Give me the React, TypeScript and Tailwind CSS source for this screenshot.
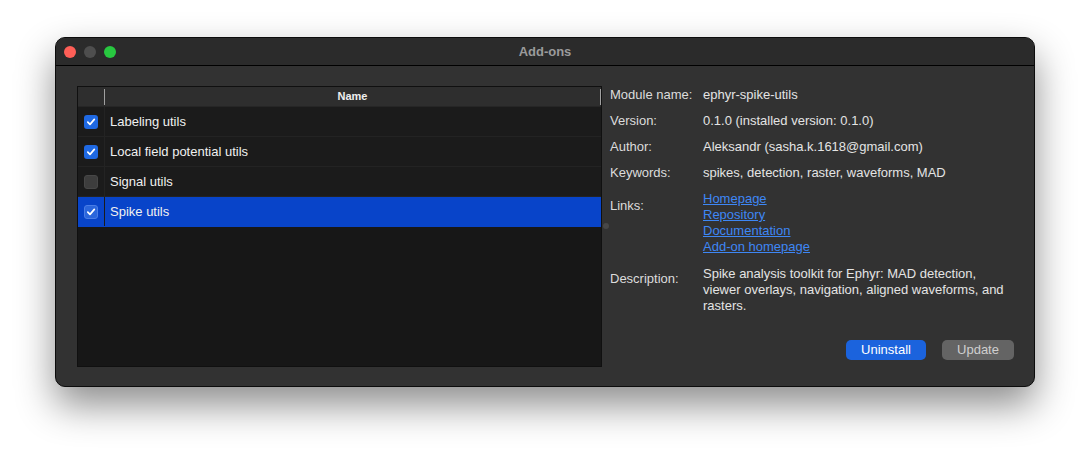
import React from 'react';

const modules = [
  { name: 'Labeling utils', checked: true },
  { name: 'Local field potential utils', checked: true },
  { name: 'Signal utils', checked: false },
  { name: 'Spike utils', checked: true, selected: true },
];

function CheckBox({ checked, selected }: { checked: boolean; selected?: boolean }) {
  if (!checked) {
    return <div className="w-[14px] h-[14px] rounded-[3px] bg-[#3d3d3d] border border-[#474747]" />;
  }
  return (
    <div
      className={`w-[14px] h-[14px] rounded-[3px] flex items-center justify-center ${
        selected ? 'bg-[#2b66dc] border border-[#4a7de6]' : 'bg-[#1f69e3]'
      }`}
    >
      <svg width="10" height="10" viewBox="0 0 10 10" fill="none">
        <path d="M1.8 5.2 L4 7.4 L8.3 2.4" stroke="white" strokeWidth="1.7" strokeLinecap="round" strokeLinejoin="round" />
      </svg>
    </div>
  );
}

function Field({ label, children }: { label: string; children: React.ReactNode }) {
  return (
    <div className="flex leading-[16px]">
      <div className="w-[93px] shrink-0 text-[#dcdcdc]">{label}</div>
      <div className="text-[#e4e4e4]">{children}</div>
    </div>
  );
}

export default function App() {
  return (
    <div
      className="w-[1091px] h-[461px] bg-white pt-[37px] pl-[55px] text-[13px]"
      style={{ fontFamily: '"Liberation Sans", Arial, sans-serif' }}
    >
      <div className="w-[980px] h-[350px] rounded-[10px] border border-[#0c0c0c] bg-[#323232] overflow-hidden flex flex-col shadow-[0_18px_38px_rgba(0,0,0,0.45)]">
        {/* Title bar */}
        <div className="h-[28px] shrink-0 bg-[#2b2b2b] border-b border-black relative flex items-center justify-center">
          <div className="absolute left-[8px] top-[8px] flex gap-[8px]">
            <span className="w-[12px] h-[12px] rounded-full bg-[#ff5f57]" />
            <span className="w-[12px] h-[12px] rounded-full bg-[#4e4e4e]" />
            <span className="w-[12px] h-[12px] rounded-full bg-[#28c840]" />
          </div>
          <span className="font-bold text-[#9b9b9b]">Add-ons</span>
        </div>

        {/* Body */}
        <div className="flex flex-1 pt-[20px] pl-[21px] pr-[20px]">
          {/* Table */}
          <div className="w-[525px] h-[281px] border border-[#101010] bg-[#171717] flex flex-col">
            <div className="h-[20px] bg-[#2e2e2e] flex items-center border-b border-[#262626]">
              <div className="w-[27px] h-full flex justify-end items-center">
                <div className="w-px h-[16px] bg-[#a0a0a0]" />
              </div>
              <div className="flex-1 text-center text-[11px] font-bold text-[#eeeeee]">Name</div>
              <div className="w-px h-[16px] bg-[#a0a0a0]" />
            </div>
            {modules.map((m) => (
              <div
                key={m.name}
                className={`h-[30px] flex items-center border-b ${
                  m.selected ? 'bg-[#0844c9] border-[#0844c9]' : 'bg-[#1b1b1b] border-[#232323]'
                }`}
              >
                <div className={`w-[27px] h-full flex items-center justify-center border-r ${m.selected ? 'border-[#1b1b1b]' : 'border-[#232323]'}`}>
                  <CheckBox checked={m.checked} selected={m.selected} />
                </div>
                <div className="pl-[5px] text-[#f0f0f0]">{m.name}</div>
              </div>
            ))}
          </div>

          {/* Splitter */}
          <div className="w-[8px] flex justify-center pt-[137px]">
            <div className="w-[6px] h-[6px] rounded-full bg-[#474747]" />
          </div>

          {/* Details */}
          <div className="flex-1 flex flex-col pt-[1px]">
            <div className="flex flex-col gap-[10px]">
              <Field label="Module name:">ephyr-spike-utils</Field>
              <Field label="Version:">0.1.0 (installed version: 0.1.0)</Field>
              <Field label="Author:">Aleksandr (sasha.k.1618@gmail.com)</Field>
              <Field label="Keywords:">spikes, detection, raster, waveforms, MAD</Field>
              <div className="flex leading-[16px]">
                <div className="w-[93px] shrink-0 text-[#dcdcdc] pt-[7px]">Links:</div>
                <div className="flex flex-col text-[#3e87f5]">
                  <a className="underline">Homepage</a>
                  <a className="underline">Repository</a>
                  <a className="underline">Documentation</a>
                  <a className="underline">Add-on homepage</a>
                </div>
              </div>
              <div className="flex leading-[16px] mt-[1px]">
                <div className="w-[93px] shrink-0 text-[#dcdcdc] pt-[5px]">Description:</div>
                <div className="text-[#e4e4e4]">
                  Spike analysis toolkit for Ephyr: MAD detection,
                  <br />
                  viewer overlays, navigation, aligned waveforms, and
                  <br />
                  rasters.
                </div>
              </div>
            </div>
            <div className="mt-[26px] flex justify-end gap-[16px]">
              <button className="w-[80px] h-[20px] rounded-[5px] bg-[#1b63dd] text-white leading-[20px]">Uninstall</button>
              <button className="w-[72px] h-[20px] rounded-[5px] bg-[#646464] text-[#cfcfcf] leading-[20px]">Update</button>
            </div>
          </div>
        </div>
      </div>
    </div>
  );
}
